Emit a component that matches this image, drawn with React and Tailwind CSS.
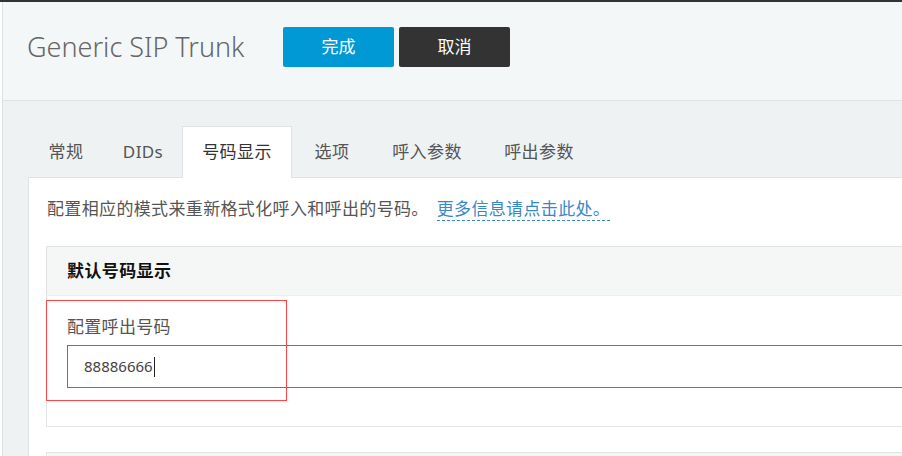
const font = "font-['Noto_Sans','Noto_Sans_CJK_SC',sans-serif]";

// tab widths measured from the reference
const tabs = [
  { label: "常规", w: "w-[76px]" },
  { label: "DIDs", w: "w-[74px]" },
  { label: "号码显示", w: "w-[110px]" },
  { label: "选项", w: "w-[76px]" },
  { label: "呼入参数", w: "w-[110px]" },
  { label: "呼出参数", w: "w-[110px]" },
];

export default function App() {
  const active = "号码显示";

  return (
    <div className={`relative w-[902px] h-[456px] overflow-hidden bg-white ${font}`}>
      <div className="h-[2px] bg-[#333]" />
      <div className="ml-[2px] h-[454px] border-l border-[#dde3e5]">
        {/* header */}
        <div className="flex h-[99px] items-start border-b border-[#dde3e5] bg-[#f4f7f8] pl-[24px] pt-[25px]">
          <div className="w-[256px] pt-[1px] text-[27px] font-light leading-[38px] text-[#666]">
            Generic SIP Trunk
          </div>
          <div className="flex gap-[5px]">
            <button className="h-[40px] w-[111px] rounded-[2px] bg-[#0099d5] text-[17px] text-white">
              完成
            </button>
            <button className="h-[40px] w-[111px] rounded-[2px] bg-[#333] text-[17px] text-white">
              取消
            </button>
          </div>
        </div>

        {/* body */}
        <div className="h-full bg-[#eef2f3] pl-[25px] pt-[25px]">
          <div className="flex gap-[2px]">
            {tabs.map((t) => (
              <div
                key={t.label}
                className={
                  t.label === active
                    ? `relative z-10 -mb-px h-[52px] ${t.w} border border-b-0 border-[#dde3e5] bg-white pt-[12px] text-center text-[17px] tracking-[0.4px] text-[#333]`
                    : `h-[51px] ${t.w} border border-transparent pt-[12px] text-center text-[17px] tracking-[0.4px] text-[#555]`
                }
              >
                {t.label}
              </div>
            ))}
          </div>

          <div className="w-[1000px] border border-[#dde3e5] bg-white pl-[17px] pt-[19px]">
            <p className="ml-px text-[17px] leading-[24px] tracking-[0.35px] text-[#555]">
              配置相应的模式来重新格式化呼入和呼出的号码。
              <span className="ml-[8px] border-b border-dashed border-[#3a87c8] text-[#3a87c8]">
                更多信息请点击此处。
              </span>
            </p>

            <div className="mt-[25px] border border-[#e1e5e6]">
              <div className="flex h-[49px] items-center border-b border-[#eceeef] bg-[#f5f6f6] pl-[20px] text-[17px] font-bold tracking-[0.4px] text-[#111]">
                默认号码显示
              </div>
              <div className="pb-[38px] pl-[20px] pt-[19px]">
                <div className="text-[17px] leading-[24px] tracking-[0.3px] text-[#555]">配置呼出号码</div>
                <div className="mt-[6px] flex h-[43px] items-center border border-[#1e8fc6] pl-[16px] text-[15px] text-[#444]">
                  88886666
                  <span className="ml-px inline-block h-[20px] w-px bg-[#222]" />
                </div>
              </div>
            </div>

            <div className="mt-[25px] h-[40px] border border-[#e1e5e6] bg-[#f5f6f6]" />
          </div>
        </div>
      </div>

      {/* annotation */}
      <div className="absolute left-[46px] top-[300px] h-[101px] w-[241px] border border-[#f44]" />
    </div>
  );
}
